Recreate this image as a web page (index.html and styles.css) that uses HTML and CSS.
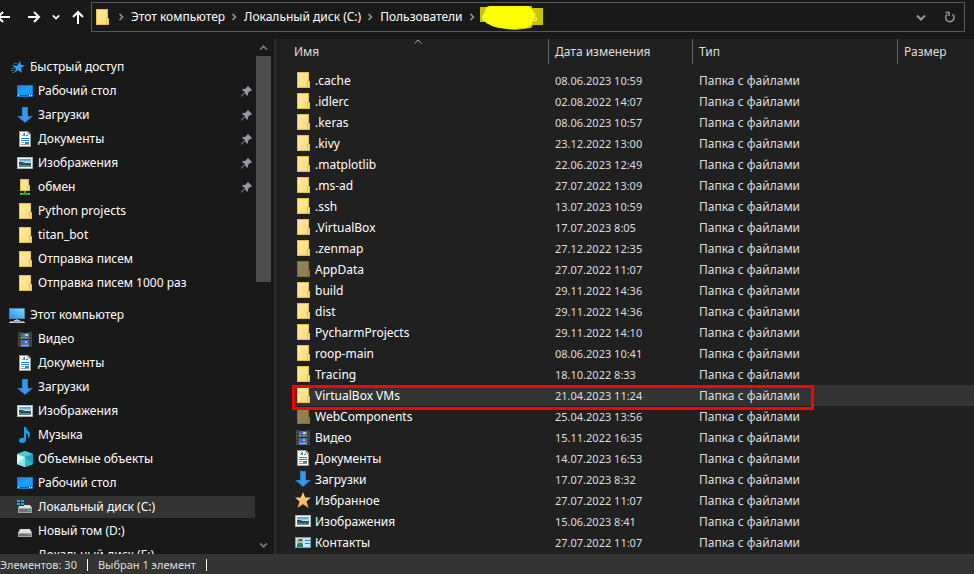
FILE: index.html
```html
<!DOCTYPE html>
<html lang="ru">
<head>
<meta charset="utf-8">
<title>Проводник</title>
<link rel="stylesheet" href="styles.css">
</head>
<body>
<svg class="defs" aria-hidden="true">
  <defs>
    <linearGradient id="g-folder" x1="0" y1="0" x2="1" y2="1"><stop offset="0" stop-color="#ffe9a0"/><stop offset="1" stop-color="#fddc7c"/></linearGradient>
    <linearGradient id="g-desk" x1="0" y1="0" x2="1" y2="1"><stop offset="0" stop-color="#1585ea"/><stop offset=".5" stop-color="#1ba1ff"/><stop offset="1" stop-color="#1690f0"/></linearGradient>
    <linearGradient id="g-screen" x1="0" y1="1" x2="1" y2="0"><stop offset="0" stop-color="#2196ee"/><stop offset=".5" stop-color="#4db8fb"/><stop offset="1" stop-color="#86d5ff"/></linearGradient>
    <linearGradient id="g-sky" x1="0" y1="0" x2="0" y2="1"><stop offset="0" stop-color="#4d8fe0"/><stop offset=".5" stop-color="#cfe6f5"/><stop offset=".55" stop-color="#39604f"/><stop offset="1" stop-color="#5f93ae"/></linearGradient>
    <linearGradient id="g-star" x1="0" y1="0" x2="0" y2="1"><stop offset="0" stop-color="#ffdc86"/><stop offset="1" stop-color="#f8a944"/></linearGradient>
  </defs>
  <symbol id="folder" viewBox="0 0 16 16"><path d="M2 0h12v9h1v7H2z" fill="#e8bf45"/><path d="M3 1h10v8h-1v6H3z" fill="url(#g-folder)"/><path d="M13 10h1v5h-1z" fill="#ffe590"/></symbol>
  <symbol id="share" viewBox="0 0 16 16"><path d="M3 0h9v6h1v6H3z" fill="#e8bf45"/><path d="M4 1h7v6h-1v4H4z" fill="#ffe38c"/><path d="M11 7h1v4h-1z" fill="#ffe590"/><path d="M7 12h2v2h4v2H3v-2h4z" fill="#22a52b"/><path d="M3 14h2v1H3zM11 14h2v1h-2z" fill="#8be08d"/></symbol>
  <symbol id="desktop" viewBox="0 0 16 16"><path d="M0 2h16v12H0z" fill="#0f7bdc"/><path d="M1 3h14v9H1z" fill="url(#g-desk)"/><path d="M1 12h14v1H1z" fill="#0b5ca8"/><path d="M1 12h1v1H1zM12 12h1v1h-1zM14 12h1v1h-1z" fill="#fff"/></symbol>
  <symbol id="download" viewBox="0 0 16 16"><path d="M5 0h6v9h5l-8 7-8-7h5z" fill="#2583d8"/><path d="M6 1h4v9h3l-5 5-5-5h3z" fill="#3a98ea"/></symbol>
  <symbol id="document" viewBox="0 0 16 16"><path d="M2 0h9l3 3v13H2z" fill="#9b9b9b"/><path d="M3 1h7v3h3v11H3z" fill="#fff"/><path d="M10 1l3 3h-3z" fill="#c9c9c9"/><path d="M5 5l2-3h1v3H7V4L6 5zM9 4h2v1H9zM4 7h8v1H4zM4 9h8v1H4z" fill="#2087d5"/><path d="M4 11h3v1H4zM4 13h8v1H4z" fill="#999"/><path d="M8 11h4v2H8z" fill="#4e8068"/></symbol>
  <symbol id="picture" viewBox="0 0 16 16"><path d="M0 2h16v12H0z" fill="#aeb1b3"/><path d="M1 3h14v10H1z" fill="#fff"/><path d="M2 4h12v8H2z" fill="url(#g-sky)"/><path d="M2 7h3l3 1 6 1v1H5L2 9z" fill="#28534b"/></symbol>
  <symbol id="video" viewBox="0 0 16 16"><path d="M1 1h14v15H1z" fill="#4b4b4b"/><path d="M4 1h8v15H4z" fill="#3b6fc8"/><path d="M4 8h8v1H4zM4 1h8v1H4z" fill="#202020"/><path d="M8 3h3v2H8z" fill="#f0cf3b"/><path d="M6 5h2v2H6zM10 5h2v2h-2z" fill="#d94730"/><path d="M4 6h2v2H4zM8 6h2v2H8z" fill="#55a33d"/><path d="M8 10h2v2H8z" fill="#e5b936"/><path d="M9 12h2v2H9z" fill="#ca5030"/><path d="M4 14h8v1H4z" fill="#8bb4e6"/><path d="M2 2h1v1H2zM2 5h1v1H2zM2 8h1v1H2zM2 11h1v1H2zM2 14h1v1H2zM13 2h1v1h-1zM13 5h1v1h-1zM13 8h1v1h-1zM13 11h1v1h-1zM13 14h1v1h-1z" fill="#111"/></symbol>
  <symbol id="music" viewBox="0 0 16 16"><path d="M7 0h2c0 3 4 4 4 8 0 2-1 3-2 4 1-3 0-5-2-6v7c0 2-2 3-4 3s-3-1-3-2.500c0-2 2.500-3.500 5-2.500z" fill="#10a0f8"/></symbol>
  <symbol id="objects" viewBox="0 0 16 16"><path d="M0 3l8-3 8 3v10l-8 3-8-3z" fill="#2cb7c9"/><path d="M0 3l8 3v10l-8-3z" fill="#d5f7f8"/><path d="M0 13l8-7v10z" fill="#8be2e8"/><path d="M0 3l8-3 8 3-8 3z" fill="#4bcbd8"/><path d="M8 6l8-3v10l-8 3z" fill="#1f9fb5"/><path d="M8 6l8 7-8 3z" fill="#2fbccb"/></symbol>
  <symbol id="drive" viewBox="0 0 16 16"><path d="M3 6h10l2 4H1z" fill="#dedede"/><path d="M1 10h14v4H1z" fill="#a3a5a7"/><path d="M2 11h12v2H2z" fill="#6f7173"/><path d="M11 11h2v1h-2z" fill="#35f04d"/></symbol>
  <symbol id="system" viewBox="0 0 16 16"><path d="M3 6h10l2 3H1z" fill="#dedede"/><path d="M1 9h14v5H1z" fill="#a3a5a7"/><path d="M2 10h12v3H2z" fill="#6f7173"/><path d="M11 11h2v1h-2z" fill="#35f04d"/><path d="M0 1h7v6H0z" fill="#333"/><path d="M0 1h3v2H0zM4 1h3v2H4zM0 4h3v2H0zM4 4h3v2H4z" fill="#00b6f0"/></symbol>
  <symbol id="computer" viewBox="0 0 16 16"><path d="M0 1h16v11H0z" fill="#58808f"/><path d="M1 2h14v9H1z" fill="url(#g-screen)"/><path d="M7 12h2v1H7z" fill="#889"/><path d="M5 13h6v1H5zM0 15h16v1H0z" fill="#c3cad3"/><path d="M1 14h14v1H1z" fill="#8a95a2"/></symbol>
  <symbol id="quick" viewBox="0 0 16 16"><path d="M11 2l1 4h4l-4 3 1 5-4-3-4 3 2-4-3-3h4z" fill="#2ca3f5"/><path d="M5 4h3v1H5zM3 6h3v1H3zM2 9h3v1H2zM2 11h3v1H2zM3 13h2v1H3z" fill="#1571b2"/></symbol>
  <symbol id="star" viewBox="0 0 16 16"><path d="M8 0l2.200 5.500H16l-4.500 4L13.500 16 8 12.300 2.500 16l2-6.500L0 5.500h5.800z" fill="url(#g-star)"/></symbol>
  <symbol id="contact" viewBox="0 0 16 16"><path d="M0 3h16v11H0z" fill="#62a5bf"/><path d="M1 4h14v9H1z" fill="#c4e8f6"/><path d="M2 5h6v8H2z" fill="#8bbfae"/><path d="M4 5h3v3H4z" fill="#664535"/><path d="M4 7h3v2H4z" fill="#e4b28e"/><path d="M2 11l2-2h3l1 2v2H2z" fill="#31775b"/><path d="M10 6h5v1h-5zM10 9h5v1h-5z" fill="#3380b7"/></symbol>
  <symbol id="pin" viewBox="0 0 12 12"><path d="M7 1l4 4-1 1H9L7 8v2l-1 1-2-3-3 3-1 1v-1l4-4-3-2 1-1h2l2-2V2z" fill="#8f9ba3"/></symbol>
  <symbol id="chev" viewBox="0 0 6 8"><path d="M1.500 1l3 3-3 3" fill="none" stroke="#999" stroke-width="1.500"/></symbol>
  <symbol id="down" viewBox="0 0 10 7"><path d="M1 1.500l4 4 4-4" fill="none" stroke="currentColor" stroke-width="2"/></symbol>
</svg>

<header class="toolbar">
  <nav class="nav" aria-label="Переходы">
    <button aria-label="Назад"><svg width="14" height="14" viewBox="0 0 14 14"><path d="M14 7H2M7 2L2 7l5 5" class="stroke"/></svg></button>
    <button aria-label="Вперёд"><svg width="14" height="14" viewBox="0 0 14 14"><path d="M1 7h11M7 2l5 5-5 5" class="stroke"/></svg></button>
    <button aria-label="Последние расположения" class="recent"><svg width="8" height="6"><use href="#down"/></svg></button>
    <button aria-label="Вверх"><svg width="14" height="14" viewBox="0 0 14 14"><path d="M7 14V2M2 7l5-5 5 5" class="stroke"/></svg></button>
  </nav>
  <div class="address">
    <svg class="icon"><use href="#folder"/></svg>
    <svg class="chev"><use href="#chev"/></svg><a href="#">Этот компьютер</a>
    <svg class="chev"><use href="#chev"/></svg><a href="#">Локальный диск (C:)</a>
    <svg class="chev"><use href="#chev"/></svg><a href="#">Пользователи</a>
    <svg class="chev"><use href="#chev"/></svg>
    <a href="#" class="marked"><span>e</span><span>s</span><svg class="marker" viewBox="0 0 64 26"><path d="M0 2h6l3-1h43v2h11v17H53l-2 3-16 2-16-2-7-2-6-4H0z" fill="#c4c400"/><path d="M6 3l4-2h38l4 3 3 5-1 5-3 6-5 3-17 1-14-2-9-4-3-6z" fill="#ff0"/></svg></a>
    <button class="history" aria-label="Предыдущие расположения"><svg width="10" height="7"><use href="#down"/></svg></button>
    <button class="refresh" aria-label="Обновить"><svg width="12" height="12" viewBox="0 0 12 12"><path d="M8.500 3.300A4.200 4.200 0 1 1 3 3.500M1.500 1.500H5V5" fill="none" stroke="currentColor" stroke-width="1.500"/></svg></button>
  </div>
</header>

<main class="panes">
  <aside class="sidebar">
    <nav class="tree" aria-label="Область навигации">
      <ul>
        <li class="root"><a href="#"><svg class="icon"><use href="#quick"/></svg>Быстрый доступ</a></li>
        <li><a href="#"><svg class="icon"><use href="#desktop"/></svg>Рабочий стол<svg class="pin"><use href="#pin"/></svg></a></li>
        <li><a href="#"><svg class="icon"><use href="#download"/></svg>Загрузки<svg class="pin"><use href="#pin"/></svg></a></li>
        <li><a href="#"><svg class="icon"><use href="#document"/></svg>Документы<svg class="pin"><use href="#pin"/></svg></a></li>
        <li><a href="#"><svg class="icon"><use href="#picture"/></svg>Изображения<svg class="pin"><use href="#pin"/></svg></a></li>
        <li><a href="#"><svg class="icon"><use href="#share"/></svg>обмен<svg class="pin"><use href="#pin"/></svg></a></li>
        <li><a href="#"><svg class="icon"><use href="#folder"/></svg>Python projects</a></li>
        <li><a href="#"><svg class="icon"><use href="#folder"/></svg>titan_bot</a></li>
        <li><a href="#"><svg class="icon"><use href="#folder"/></svg>Отправка писем</a></li>
        <li><a href="#"><svg class="icon"><use href="#folder"/></svg>Отправка писем 1000 раз</a></li>
      </ul>
      <ul>
        <li class="root"><a href="#"><svg class="icon"><use href="#computer"/></svg>Этот компьютер</a></li>
        <li><a href="#"><svg class="icon"><use href="#video"/></svg>Видео</a></li>
        <li><a href="#"><svg class="icon"><use href="#document"/></svg>Документы</a></li>
        <li><a href="#"><svg class="icon"><use href="#download"/></svg>Загрузки</a></li>
        <li><a href="#"><svg class="icon"><use href="#picture"/></svg>Изображения</a></li>
        <li><a href="#"><svg class="icon"><use href="#music"/></svg>Музыка</a></li>
        <li><a href="#"><svg class="icon"><use href="#objects"/></svg>Объемные объекты</a></li>
        <li><a href="#"><svg class="icon"><use href="#desktop"/></svg>Рабочий стол</a></li>
        <li class="current"><a href="#"><svg class="icon"><use href="#system"/></svg>Локальный диск (C:)</a></li>
        <li><a href="#"><svg class="icon"><use href="#drive"/></svg>Новый том (D:)</a></li>
        <li><a href="#"><svg class="icon"></svg>Локальный диск (E:)</a></li>
      </ul>
    </nav>
    <div class="scrollbar">
      <svg class="arrow flip" width="9" height="6"><use href="#down"/></svg>
      <div class="thumb"></div>
      <svg class="arrow" width="9" height="6"><use href="#down"/></svg>
    </div>
  </aside>

  <section class="files">
    <table>
      <colgroup><col class="c-name"><col class="c-date"><col class="c-type"><col></colgroup>
      <thead><tr><th><span>Имя</span><svg class="sort" viewBox="0 0 8 5"><path d="M.500 4.500L4 1l3.500 3.500" fill="none" stroke="#aaa"/></svg></th><th><span>Дата изменения</span></th><th><span>Тип</span></th><th><span>Размер</span></th></tr></thead>
      <tbody>
        <tr><td><svg class="icon"><use href="#folder"/></svg>.cache</td><td>08.06.2023 10:59</td><td>Папка с файлами</td><td></td></tr>
        <tr><td><svg class="icon"><use href="#folder"/></svg>.idlerc</td><td>02.08.2022 14:07</td><td>Папка с файлами</td><td></td></tr>
        <tr><td><svg class="icon"><use href="#folder"/></svg>.keras</td><td>08.06.2023 10:57</td><td>Папка с файлами</td><td></td></tr>
        <tr><td><svg class="icon"><use href="#folder"/></svg>.kivy</td><td>23.12.2022 13:00</td><td>Папка с файлами</td><td></td></tr>
        <tr><td><svg class="icon"><use href="#folder"/></svg>.matplotlib</td><td>22.06.2023 12:49</td><td>Папка с файлами</td><td></td></tr>
        <tr><td><svg class="icon"><use href="#folder"/></svg>.ms-ad</td><td>27.07.2022 13:09</td><td>Папка с файлами</td><td></td></tr>
        <tr><td><svg class="icon"><use href="#folder"/></svg>.ssh</td><td>13.07.2023 10:59</td><td>Папка с файлами</td><td></td></tr>
        <tr><td><svg class="icon"><use href="#folder"/></svg>.VirtualBox</td><td>17.07.2023 8:05</td><td>Папка с файлами</td><td></td></tr>
        <tr><td><svg class="icon"><use href="#folder"/></svg>.zenmap</td><td>27.12.2022 12:35</td><td>Папка с файлами</td><td></td></tr>
        <tr><td><svg class="icon hidden"><use href="#folder"/></svg>AppData</td><td>27.07.2022 11:07</td><td>Папка с файлами</td><td></td></tr>
        <tr><td><svg class="icon"><use href="#folder"/></svg>build</td><td>29.11.2022 14:36</td><td>Папка с файлами</td><td></td></tr>
        <tr><td><svg class="icon"><use href="#folder"/></svg>dist</td><td>29.11.2022 14:36</td><td>Папка с файлами</td><td></td></tr>
        <tr><td><svg class="icon"><use href="#folder"/></svg>PycharmProjects</td><td>29.11.2022 14:10</td><td>Папка с файлами</td><td></td></tr>
        <tr><td><svg class="icon"><use href="#folder"/></svg>roop-main</td><td>08.06.2023 10:41</td><td>Папка с файлами</td><td></td></tr>
        <tr><td><svg class="icon"><use href="#folder"/></svg>Tracing</td><td>18.10.2022 8:33</td><td>Папка с файлами</td><td></td></tr>
        <tr class="selected"><td><svg class="icon"><use href="#folder"/></svg>VirtualBox VMs<i class="frame"></i></td><td>21.04.2023 11:24</td><td>Папка с файлами</td><td></td></tr>
        <tr><td><svg class="icon hidden"><use href="#folder"/></svg>WebComponents</td><td>25.04.2023 13:56</td><td>Папка с файлами</td><td></td></tr>
        <tr><td><svg class="icon"><use href="#video"/></svg>Видео</td><td>15.11.2022 16:35</td><td>Папка с файлами</td><td></td></tr>
        <tr><td><svg class="icon"><use href="#document"/></svg>Документы</td><td>14.07.2023 16:53</td><td>Папка с файлами</td><td></td></tr>
        <tr><td><svg class="icon"><use href="#download"/></svg>Загрузки</td><td>17.07.2023 8:32</td><td>Папка с файлами</td><td></td></tr>
        <tr><td><svg class="icon"><use href="#star"/></svg>Избранное</td><td>27.07.2022 11:07</td><td>Папка с файлами</td><td></td></tr>
        <tr><td><svg class="icon"><use href="#picture"/></svg>Изображения</td><td>15.06.2023 8:41</td><td>Папка с файлами</td><td></td></tr>
        <tr><td><svg class="icon"><use href="#contact"/></svg>Контакты</td><td>27.07.2022 11:07</td><td>Папка с файлами</td><td></td></tr>
      </tbody>
    </table>
  </section>
</main>

<footer class="status"><span>Элементов: 30</span><span>Выбран 1 элемент</span></footer>
</body>
</html>
```
FILE: styles.css
```css
* { box-sizing: border-box; }

body {
  margin: 0;
  height: 100vh;
  display: flex;
  flex-direction: column;
  overflow: hidden;
  background: #191919;
  color: #fff;
  font: 12px/20px "Noto Sans", "Open Sans", sans-serif;
}

a { color: inherit; text-decoration: none; white-space: nowrap; }
button { border: 0; padding: 0; background: none; color: inherit; display: flex; align-items: center; justify-content: center; }
ul { list-style: none; margin: 0; padding: 0; }
svg { flex: none; }

.defs { position: absolute; width: 0; height: 0; }
.icon { width: 16px; height: 16px; }
.stroke { fill: none; stroke: #fff; stroke-width: 2; }

/* Toolbar */
.toolbar { flex: none; display: flex; padding: 2px 9px 7px 0; }
.nav { flex: none; width: 91px; display: flex; align-items: center; gap: 11px; margin-left: -4px; margin-right: 4px; }
.nav button:first-child { margin-right: 6px; }
.address { flex: 1; min-width: 0; height: 30px; display: flex; align-items: center; border: 1px solid #5a5a5a; padding-left: 2px; }
.address .icon { margin-right: 2px; }
.chev { width: 6px; height: 8px; margin: 0 7px 0 6px; }
.marked { position: relative; display: flex; justify-content: space-between; width: 56px; color: #ffff70; }
.marker { position: absolute; left: -2px; top: -2px; width: 64px; height: 26px; }
.marked span { position: relative; z-index: 1; }
.history { margin-left: auto; width: 30px; height: 28px; color: #999; }
.refresh { width: 28px; height: 28px; color: #999; }

/* Panes */
.panes { flex: 1; min-height: 0; display: flex; }
.sidebar { flex: none; width: 276px; display: flex; border-right: 2px solid #2b2b2b; }
.tree { flex: 1; overflow: hidden; padding-top: 16px; }
.tree ul + ul { margin-top: 8px; }
.tree a { display: flex; align-items: center; gap: 5px; height: 24px; padding-left: 17px; padding-right: 2px; }
.tree .root a { padding-left: 9px; }
.tree .current a { background: #333; border: solid #191919; border-width: 1px 0; }
.pin { width: 12px; height: 12px; margin-left: auto; }
.scrollbar { flex: none; width: 19px; display: flex; flex-direction: column; align-items: center; padding: 6px 2px 6px 0; color: #777; }
.thumb { width: 15px; height: 226px; margin-top: 5px; margin-bottom: auto; background: #4d4d4d; }
.flip { transform: rotate(180deg); }

/* File list */
.files { flex: 1; min-width: 0; overflow: hidden; padding-left: 16px; background: #202020; }
table { width: 100%; table-layout: fixed; border-collapse: collapse; }
.c-name { width: 257px; }
.c-date { width: 144px; }
.c-type { width: 205px; }
th { position: relative; height: 31px; padding: 0 0 6px; font-weight: 400; text-align: left; color: #dedede; }
th span { display: block; height: 25px; line-height: 25px; padding-left: 6px; border-right: 1px solid #636363; }
th:first-child span { padding-left: 2px; }
th:last-child span { border-right: 0; }
.sort { position: absolute; left: 122px; top: 0; width: 8px; height: 5px; }
td { height: 21px; padding: 0 0 0 6px; white-space: nowrap; color: #dedede; }
td:first-child { position: relative; padding-left: 3px; color: #fff; }
td:nth-child(2) { font-size: 11px; }
td .icon { vertical-align: middle; margin: 0 4px 2px 0; }
.hidden { opacity: .5; }
.selected { background: #333; }
.frame { position: absolute; z-index: 1; left: 0; top: 0; width: 522px; height: 25px; border: 3px solid #f00; }

/* Status bar */
.status { flex: none; display: flex; align-items: center; height: 20px; padding-top: 2px; background: #333; color: #dedede; font-size: 11px; }
.status span { padding-right: 10px; margin-right: 10px; border-right: 1px solid #fff; line-height: 12px; }
```
